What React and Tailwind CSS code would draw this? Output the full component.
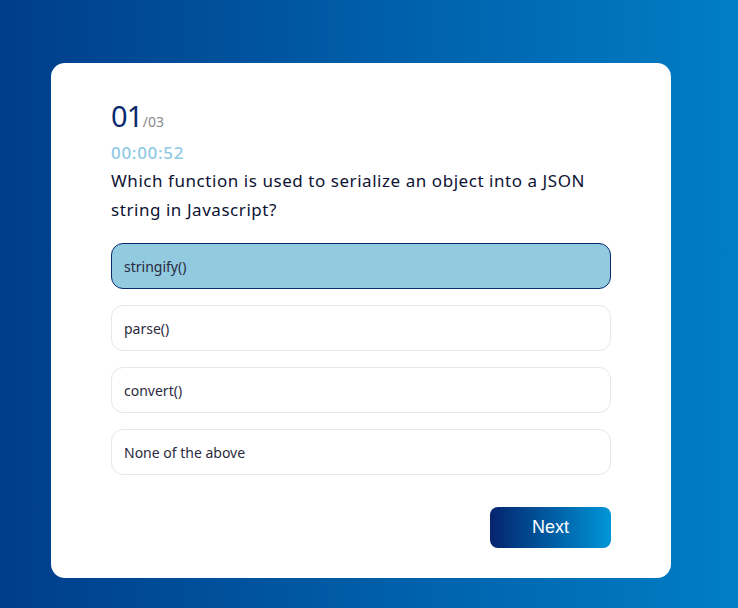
import { useState } from "react";

const options = ["stringify()", "parse()", "convert()", "None of the above"];

export default function App() {
  const [selected, setSelected] = useState(0);

  return (
    <div className="min-h-[608px] w-full bg-gradient-to-r from-[#003d8a] to-[#007ec6] pt-[63px] pb-[30px] font-['Noto_Sans',sans-serif]">
      <div className="ml-[51px] w-[620px] h-[515px] bg-white rounded-[14px] px-[60px] pt-[34px]">
        {/* COUNTER */}
        <div className="flex items-baseline text-[#0b2a6e]">
          <span className="text-[29px] leading-[38px] tracking-tight">01</span>
          <span className="text-[14px] text-[#8a8a8a]">/03</span>
        </div>

        <p className="text-[17px] leading-[24px] font-medium tracking-[0.7px] text-[#8ecae6] mt-[6px]">00:00:52</p>

        <p className="text-[17px] leading-[29px] tracking-[0.55px] text-[#0d1333] mt-[1px] w-[500px]">
          Which function is used to serialize an object into a JSON string in Javascript?
        </p>

        {/* OPTIONS */}
        <div className="mt-[19px] flex flex-col gap-[16px] w-[500px]">
          {options.map((opt, i) => (
            <button
              key={opt}
              onClick={() => setSelected(i)}
              className={
                i === selected
                  ? "h-[46px] w-full text-left px-[12px] rounded-[12px] border border-[#0b2a6e] bg-[#92cae0] text-[14px] text-[#2b2b40]"
                  : "h-[46px] w-full text-left px-[12px] rounded-[12px] border border-[#e6e6e6] bg-white text-[14px] text-[#2b2b40]"
              }
            >
              {opt}
            </button>
          ))}
        </div>

        <div className="flex justify-end w-[500px] mt-[32px]">
          <button className="w-[121px] h-[41px] rounded-[8px] bg-gradient-to-r from-[#06246e] to-[#0096d8] text-white text-[18px] font-['Liberation_Sans',sans-serif]">
            Next
          </button>
        </div>
      </div>
    </div>
  );
}
